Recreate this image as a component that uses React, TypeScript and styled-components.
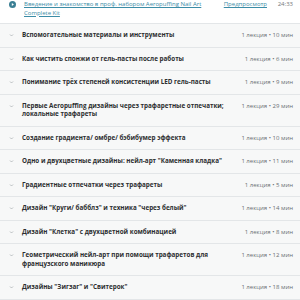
import React from 'react';
import styled, { createGlobalStyle } from 'styled-components';

// --- Dados do currículo ---
type Section = { title: string; lectures: number; minutes: number };

const sections: Section[] = [
  { title: 'Вспомогательные материалы и инструменты', lectures: 1, minutes: 10 },
  { title: 'Как чистить спонжи от гель-пасты после работы', lectures: 1, minutes: 6 },
  { title: 'Понимание трёх степеней консистенции LED гель-пасты', lectures: 1, minutes: 9 },
  { title: 'Первые Aeropuffing дизайны через трафаретные отпечатки; локальные трафареты', lectures: 1, minutes: 29 },
  { title: 'Создание градиента/ омбре/ бэбибумер эффекта', lectures: 1, minutes: 10 },
  { title: 'Одно и двухцветные дизайны: нейл-арт "Каменная кладка"', lectures: 1, minutes: 11 },
  { title: 'Градиентные отпечатки через трафареты', lectures: 1, minutes: 5 },
  { title: 'Дизайн "Круги/ бабблз" и техника "через белый"', lectures: 1, minutes: 14 },
  { title: 'Дизайн "Клетка" с двухцветной комбинацией', lectures: 1, minutes: 8 },
  { title: 'Геометрический нейл-арт при помощи трафаретов для французского маникюра', lectures: 1, minutes: 12 },
  { title: 'Дизайны "Зигзаг" и "Свитерок"', lectures: 1, minutes: 18 },
];

// --- Estilos ---
const GlobalStyle = createGlobalStyle`
  html, body {
    margin: 0;
    padding: 0;
    background: #ffffff;
    font-family: "Open Sans", "Liberation Sans", sans-serif;
  }
`;

const Curriculum = styled.div`
  width: 300px;
  overflow: hidden;
`;

const LectureRow = styled.div`
  display: flex;
  align-items: flex-start;
  padding: 0 7px 6px 9px;
  background: #ffffff;
  border-bottom: 1px solid #e3e6e8;
`;

const PlayIcon = styled.svg`
  flex-shrink: 0;
  width: 7px;
  height: 7px;
  margin-top: 1px;
  margin-right: 8px;
`;

const LectureLink = styled.a`
  flex: 1;
  max-width: 180px;
  font-size: 6px;
  line-height: 8.5px;
  color: #3b8ca6;
  text-decoration: underline;
`;

const Preview = styled.a`
  margin-left: auto;
  font-size: 6px;
  line-height: 8.5px;
  color: #3b8ca6;
  text-decoration: underline;
`;

const Duration = styled.span`
  width: 26px;
  text-align: right;
  font-size: 6px;
  line-height: 8.5px;
  color: #73777a;
`;

const SectionRow = styled.div`
  display: flex;
  align-items: flex-start;
  padding: 7px 7px 7px 9px;
  background: #f7f8f8;
  border-bottom: 1px solid #e3e6e8;
`;

const Chevron = styled.svg`
  flex-shrink: 0;
  width: 5px;
  height: 8.5px;
  margin-right: 8px;
`;

const SectionTitle = styled.div`
  flex: 1;
  font-size: 6.3px;
  line-height: 8.5px;
  font-weight: 700;
  color: #2d2f31;
`;

const Meta = styled.div`
  flex-shrink: 0;
  margin-left: 12px;
  font-size: 6px;
  line-height: 8.5px;
  color: #6a6f73;
`;

// --- Componente ---
const App: React.FC = () => (
  <>
    <GlobalStyle />
    <Curriculum>
      <LectureRow>
        <PlayIcon viewBox="0 0 10 10">
          <circle cx="5" cy="5" r="5" fill="#3b7f94" />
          <path d="M4 3 L7 5 L4 7 Z" fill="#ffffff" />
        </PlayIcon>
        <LectureLink href="#">
          Введение и знакомство в проф. набором Aeropuffing Nail Art Complete Kit
        </LectureLink>
        <Preview href="#">Предпросмотр</Preview>
        <Duration>24:33</Duration>
      </LectureRow>
      {sections.map((s) => (
        <SectionRow key={s.title}>
          <Chevron viewBox="0 0 10 17">
            <path d="M2 7 L5 10 L8 7" fill="none" stroke="#9aa0a4" strokeWidth="1.3" />
          </Chevron>
          <SectionTitle>{s.title}</SectionTitle>
          <Meta>
            {s.lectures} лекция • {s.minutes} мин
          </Meta>
        </SectionRow>
      ))}
    </Curriculum>
  </>
);

export default App;
